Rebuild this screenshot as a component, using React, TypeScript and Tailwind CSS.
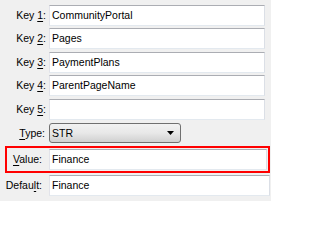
import React from "react";

const inputCls =
  "h-[21px] bg-white border border-t-[#abadb3] border-l-[#e2e3ea] border-r-[#dbdfe6] border-b-[#e3e9ef] pl-[2px] flex items-center text-black leading-none";

function Label({ pre, u, post, w }: { pre: string; u: string; post: string; w: string }) {
  return (
    <div className={`${w} shrink-0 text-right text-black leading-none`}>
      {pre}
      <u className="underline decoration-1 underline-offset-[2px]">{u}</u>
      {post}
    </div>
  );
}

function KeyRow({ n, value, mt }: { n: string; value: string; mt: string }) {
  return (
    <div className={`flex items-center ${mt}`}>
      <Label pre="Key " u={n} post=":" w="w-[46px]" />
      <div className={`${inputCls} ml-[3px] w-[216px]`}>{value}</div>
    </div>
  );
}

export default function App() {
  return (
    <div
      className="w-[271px] h-[201px] bg-[#f0f0f0] overflow-hidden pt-[5px] text-[10.5px]"
      style={{ fontFamily: '"Liberation Sans", Arial, sans-serif' }}
    >
      <KeyRow n="1" value="CommunityPortal" mt="mt-0" />
      <KeyRow n="2" value="Pages" mt="mt-[2px]" />
      <KeyRow n="3" value="PaymentPlans" mt="mt-[3px]" />
      <KeyRow n="4" value="ParentPageName" mt="mt-[2px]" />
      <KeyRow n="5" value="" mt="mt-[3px]" />
      <div className="flex items-center mt-[3px]">
        <Label pre="" u="T" post="ype:" w="w-[45px]" />
        <div className="ml-[4px] w-[132px] h-[20px] rounded-[3px] border border-[#707070] bg-gradient-to-b from-[#f2f2f2] via-[#e8e8e8] to-[#d0d0d0] flex items-center pl-[2px] pr-[6px] text-black leading-none">
          <span className="flex-1">STR</span>
          <svg width="7" height="4" viewBox="0 0 7 4">
            <polygon points="0,0 7,0 3.5,4" fill="#000" />
          </svg>
        </div>
      </div>
      <div className="mt-[3px] ml-[5px] w-[265px] h-[27px] border-2 border-[#ff0000] flex items-center">
        <Label pre="" u="V" post="alue:" w="w-[35px]" />
        <div className={`${inputCls} ml-[7px] w-[218px] h-[21px]`}>Finance</div>
      </div>
      <div className="flex items-center mt-[2px]">
        <Label pre="Defau" u="l" post="t:" w="w-[42px]" />
        <div className={`${inputCls} ml-[7px] w-[221px]`}>Finance</div>
      </div>
    </div>
  );
}
